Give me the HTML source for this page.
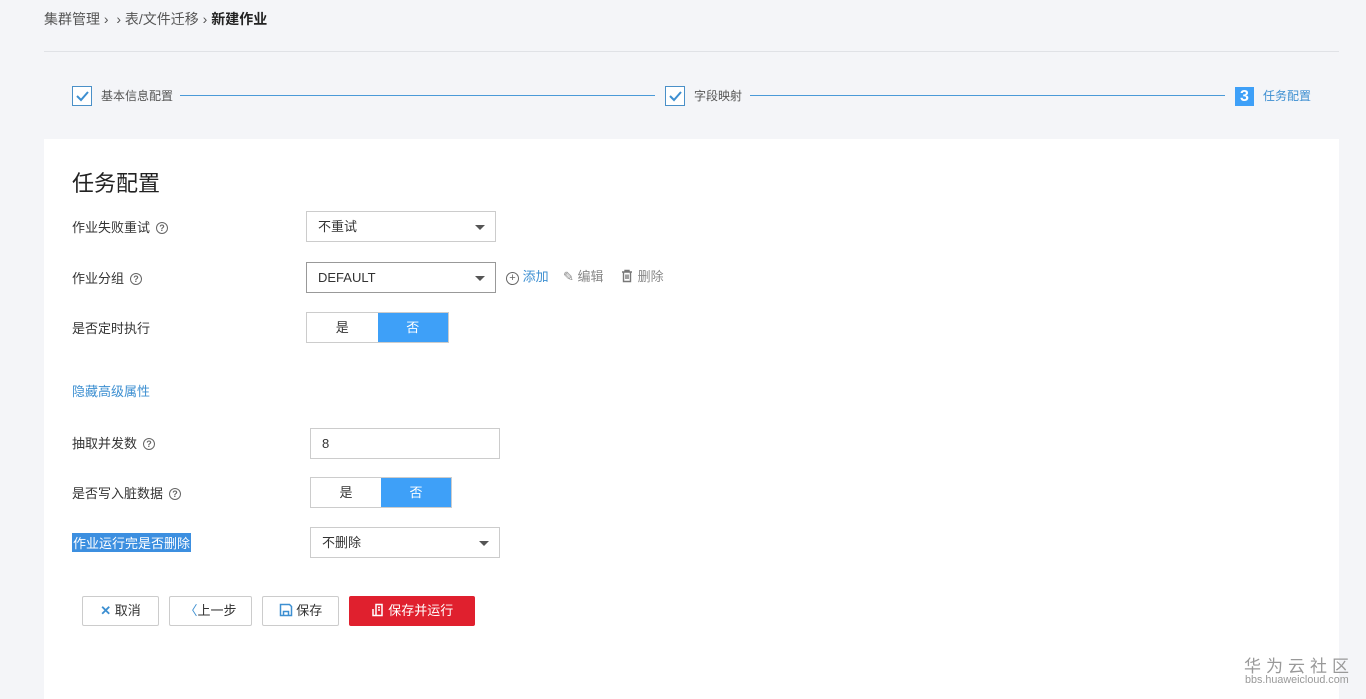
<!DOCTYPE html>
<html><head><meta charset="utf-8"><style>
*{box-sizing:border-box;margin:0;padding:0}
body{width:1366px;height:694px;overflow:hidden;background:#f4f5f8;font-family:"Liberation Sans","Noto Sans CJK SC",sans-serif;font-size:13px;color:#333;position:relative}
.a{position:absolute}
.crumb{left:44px;top:9px;font-size:14px;color:#555}
.crumb b{color:#222}
.hr{left:44px;top:51px;width:1295px;height:1px;background:#e0e2e6}
.chk{width:20px;height:20px;border:1px solid #4a90c8;background:#fff}
.step{font-size:12px;color:#555}
.line{height:1px;background:#4a9ad8}
.panel{left:44px;top:139px;width:1295px;height:560px;background:#fff}
.lbl{font-size:13px;color:#333}
.q{display:inline-block;width:12px;height:12px;border:1.3px solid #666;border-radius:50%;font-size:9px;line-height:10px;text-align:center;color:#666;margin-left:6px;vertical-align:1px;font-weight:bold}
.sel{border:1px solid #ccc;background:#fff;height:31px;padding-left:11px;line-height:29px;font-size:13px}
.dd:after{content:"";position:absolute;right:10px;top:13px;border:5px solid transparent;border-top:5px solid #555}
.tog{border:1px solid #ccc;height:31px;display:flex}
.tog div{width:71px;text-align:center;line-height:29px}
.tog .on{background:#3ea0f8;color:#fff}
.btn{height:30px;border:1px solid #ccc;border-radius:2px;background:#fff;line-height:28px;text-align:center;font-size:13px;color:#333}
</style></head><body>
<div class="a crumb">集群管理 › &nbsp;› 表/文件迁移 › <b>新建作业</b></div>
<div class="a hr"></div>
<div class="a chk" style="left:72px;top:86px"><svg width="18" height="18"><path d="M4 9l4 4 7-8" stroke="#3d8fd1" stroke-width="2" fill="none"/></svg></div>
<div class="a step" style="left:101px;top:87px">基本信息配置</div>
<div class="a line" style="left:180px;top:95px;width:475px"></div>
<div class="a chk" style="left:665px;top:86px"><svg width="18" height="18"><path d="M4 9l4 4 7-8" stroke="#3d8fd1" stroke-width="2" fill="none"/></svg></div>
<div class="a step" style="left:694px;top:87px">字段映射</div>
<div class="a line" style="left:750px;top:95px;width:475px"></div>
<div class="a" style="left:1235px;top:87px;width:19px;height:19px;background:#3ea0f8;color:#fff;font-weight:bold;font-size:16px;text-align:center;line-height:19px">3</div>
<div class="a step" style="left:1263px;top:87px;color:#3d8fd1">任务配置</div>
<div class="a panel"></div>
<div class="a" style="left:72px;top:166px;font-size:22px;color:#222">任务配置</div>
<div class="a lbl" style="left:72px;top:217px">作业失败重试<span class="q">?</span></div>
<div class="a sel dd" style="left:306px;top:211px;width:190px">不重试</div>
<div class="a lbl" style="left:72px;top:268px">作业分组<span class="q">?</span></div>
<div class="a sel dd" style="left:306px;top:262px;width:190px;border-color:#999">DEFAULT</div>
<div class="a" style="left:506px;top:266px;color:#3d8fd1"><span style="display:inline-block;width:13px;height:13px;border:1.3px solid #3d8fd1;border-radius:50%;font-size:11px;line-height:10px;text-align:center;color:#666;border-color:#666">+</span> 添加</div>
<div class="a" style="left:563px;top:266px;color:#888">✎ 编辑</div>
<div class="a" style="left:620px;top:266px;color:#888"><svg width="14" height="14" style="vertical-align:-2px"><path d="M2 3h10M5 3V1.5h4V3M3.5 3v9.5h7V3M6 5.5v4.5M8 5.5v4.5" stroke="#777" stroke-width="1.4" fill="none"/></svg> 删除</div>
<div class="a lbl" style="left:72px;top:318px">是否定时执行</div>
<div class="a tog" style="left:306px;top:312px;width:143px"><div>是</div><div class="on">否</div></div>
<div class="a" style="left:72px;top:381px;color:#3d8fd1">隐藏高级属性</div>
<div class="a lbl" style="left:72px;top:433px">抽取并发数<span class="q">?</span></div>
<div class="a sel" style="left:310px;top:428px;width:190px;line-height:29px">8</div>
<div class="a lbl" style="left:72px;top:483px">是否写入脏数据<span class="q">?</span></div>
<div class="a tog" style="left:310px;top:477px;width:142px"><div>是</div><div class="on">否</div></div>
<div class="a lbl" style="left:72px;top:533px;background:#3c8fe0;color:#fff;padding:0 1px">作业运行完是否删除</div>
<div class="a sel dd" style="left:310px;top:527px;width:190px">不删除</div>
<div class="a btn" style="left:82px;top:596px;width:77px"><span style="color:#3d8fd1;font-weight:bold">✕</span> 取消</div>
<div class="a btn" style="left:169px;top:596px;width:83px"><span style="color:#3d8fd1">〈</span>上一步</div>
<div class="a btn" style="left:262px;top:596px;width:77px"><svg width="14" height="14" style="vertical-align:-2px"><path d="M1.5 1.5h9l2 2v9h-11z M4.5 12.5v-4h5v4" stroke="#3d8fd1" stroke-width="1.5" fill="none"/></svg> 保存</div>
<div class="a btn" style="left:349px;top:596px;width:126px;background:#e0202e;border-color:#e0202e;color:#fff"><svg width="14" height="14" style="vertical-align:-2px"><path d="M5 1.5h6v11h-6z M2 6v6.5h3 M7 4.5h2M7 7h2" stroke="#fff" stroke-width="1.5" fill="none"/></svg> 保存并运行</div>
<div class="a" style="left:1244px;top:652px;font-size:17px;color:#999;letter-spacing:5px">华为云社区</div>
<div class="a" style="left:1245px;top:674px;font-size:11px;color:#999;transform:scale(0.98);transform-origin:left">bbs.huaweicloud.com</div>
</body></html>
